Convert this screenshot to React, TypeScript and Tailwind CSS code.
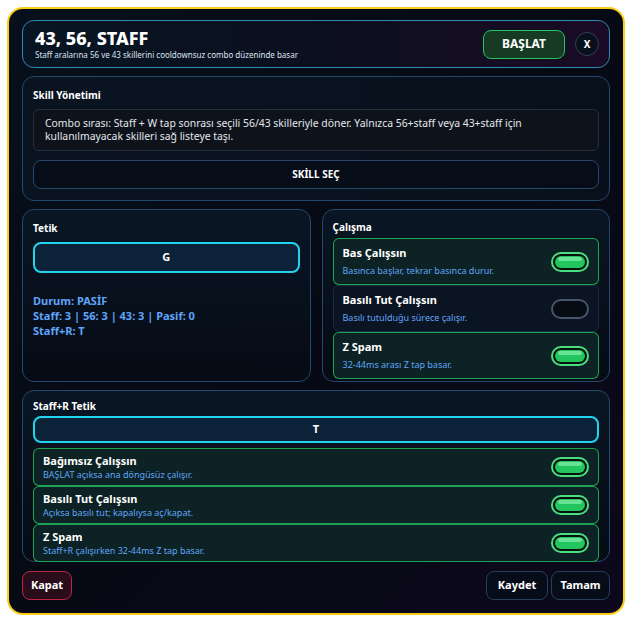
import React from 'react'

const font = { fontFamily: '"Noto Sans", "Open Sans", sans-serif' }

function Toggle({ on }: { on: boolean }) {
  if (on) {
    return (
      <div className="w-[38px] h-[20px] rounded-full border-2 border-[#4ade80] bg-[#06110c] p-[2px] shrink-0">
        <div className="h-full w-full rounded-full bg-[#22c55e] relative overflow-hidden">
          <div className="absolute left-[3px] right-[3px] top-[1px] h-[4px] rounded-full bg-[#86efac]/70" />
        </div>
      </div>
    )
  }
  return <div className="w-[38px] h-[20px] rounded-full border-2 border-[#475569] bg-[#070b12] shrink-0" />
}

function OptionRow({
  title,
  desc,
  on,
  tall,
}: {
  title: string
  desc: string
  on: boolean
  tall?: boolean
}) {
  return (
    <div
      className={
        'flex items-center justify-between rounded-md border px-[9px] ' +
        (tall ? 'h-[47px] ' : 'h-[38px] ') +
        (on ? 'border-[#22c55e]/80 bg-[#0c2224]' : 'border-[#1e2b3d] bg-[#0a1422]')
      }
    >
      <div className={'flex flex-col ' + (tall ? 'gap-[5px]' : 'gap-[1px]')}>
        <span className="text-[11px] font-bold text-white leading-[14px]">{title}</span>
        <span className="text-[9px] text-[#60a5fa] leading-[12px]">{desc}</span>
      </div>
      <Toggle on={on} />
    </div>
  )
}

function KeyBox({ k, h }: { k: string; h: string }) {
  return (
    <div
      className={
        'flex items-center justify-center rounded-lg border-2 border-[#22d3ee] bg-[#0b2238] text-[11px] font-bold text-white ' +
        h
      }
    >
      {k}
    </div>
  )
}

export default function App() {
  return (
    <div className="w-[632px] h-[622px] bg-white p-[7px]" style={font}>
      <div className="h-[608px] w-[618px] rounded-[16px] border-2 border-[#facc15] bg-gradient-to-br from-[#07101b] via-[#060a14] to-[#0d081c] px-[13px] pt-[11px] flex flex-col">
        {/* header */}
        <div className="h-[48px] rounded-xl border border-[#2f8bb0] bg-gradient-to-r from-[#081522] via-[#0b0f1f] to-[#1a0b26] flex items-center justify-between pl-[12px] pr-[10px]">
          <div className="flex flex-col">
            <span className="text-[18px] font-extrabold text-white leading-[20px]">43, 56, STAFF</span>
            <span className="text-[8px] text-[#dbe4f0] leading-[10px] mt-[2px]">
              Staff aralarına 56 ve 43 skillerini cooldownsuz combo düzeninde basar
            </span>
          </div>
          <div className="flex items-center gap-[10px]">
            <button className="w-[82px] h-[29px] rounded-lg border border-[#22c55e] bg-[#173a25] text-[12px] font-bold text-white">
              BAŞLAT
            </button>
            <button className="w-[24px] h-[24px] rounded-full border border-[#334155] bg-[#0a0f1c] text-[10px] font-bold text-white flex items-center justify-center">
              X
            </button>
          </div>
        </div>

        {/* skill management */}
        <div className="mt-[8px] rounded-xl border border-[#24486a] bg-gradient-to-r from-[#0a1420] to-[#08101c] px-[10px] pt-[11px] pb-[11px]">
          <div className="text-[10px] font-bold text-white leading-[14px]">Skill Yönetimi</div>
          <div className="mt-[7px] h-[42px] rounded-md border border-[#262f3c] bg-[#0e131b] px-[11px] pt-[7px] text-[10.4px] text-[#e5e7eb] leading-[13px]">
            Combo sırası: Staff + W tap sonrası seçili 56/43 skilleriyle döner. Yalnızca 56+staff veya 43+staff için
            kullanılmayacak skilleri sağ listeye taşı.
          </div>
          <button className="mt-[9px] w-full h-[29px] rounded-lg border border-[#28466a] bg-[#070d18] text-[10px] font-bold text-white">
            SKİLL SEÇ
          </button>
        </div>

        {/* trigger + mode */}
        <div className="mt-[8px] grid grid-cols-2 gap-[11px] h-[173px]">
          <div className="rounded-xl border border-[#24486a] bg-gradient-to-b from-[#0a1624] to-[#060b15] px-[10px] pt-[11px]">
            <div className="text-[10px] font-bold text-white leading-[14px]">Tetik</div>
            <div className="mt-[7px]">
              <KeyBox k="G" h="h-[31px]" />
            </div>
            <div className="mt-[20px] text-[11px] font-bold text-[#60a5fa] leading-[15px]">
              <div>Durum: PASİF</div>
              <div>Staff: 3 | 56: 3 | 43: 3 | Pasif: 0</div>
              <div>Staff+R: T</div>
            </div>
          </div>
          <div className="rounded-xl border border-[#24486a] bg-gradient-to-b from-[#0a1624] to-[#060b15] px-[10px] pt-[10px] flex flex-col">
            <div className="text-[10px] font-bold text-white leading-[14px]">Çalışma</div>
            <div className="mt-[4px] flex flex-col">
              <OptionRow tall on title="Bas Çalışsın" desc="Basınca başlar, tekrar basınca durur." />
              <OptionRow tall on={false} title="Basılı Tut Çalışsın" desc="Basılı tutulduğu sürece çalışır." />
              <OptionRow tall on title="Z Spam" desc="32-44ms arası Z tap basar." />
            </div>
          </div>
        </div>

        {/* staff+r trigger */}
        <div className="mt-[8px] h-[172px] rounded-xl border border-[#24486a] bg-gradient-to-b from-[#0a1624] to-[#060b15] px-[10px] pt-[8px]">
          <div className="text-[10px] font-bold text-white leading-[14px]">Staff+R Tetik</div>
          <div className="mt-[3px]">
            <KeyBox k="T" h="h-[27px]" />
          </div>
          <div className="mt-[5px] flex flex-col">
            <OptionRow on title="Bağımsız Çalışsın" desc="BAŞLAT açıksa ana döngüsüz çalışır." />
            <OptionRow on title="Basılı Tut Çalışsın" desc="Açıksa basılı tut; kapalıysa aç/kapat." />
            <OptionRow on title="Z Spam" desc="Staff+R çalışırken 32-44ms Z tap basar." />
          </div>
        </div>

        {/* footer */}
        <div className="mt-[9px] flex items-center justify-between">
          <button className="w-[50px] h-[29px] rounded-lg border border-[#be2448] bg-[#2a0d1a] text-[11px] font-bold text-white">
            Kapat
          </button>
          <div className="flex gap-[3px]">
            <button className="w-[62px] h-[29px] rounded-lg border border-[#26405e] bg-[#070d18] text-[11px] font-bold text-white">
              Kaydet
            </button>
            <button className="w-[59px] h-[29px] rounded-lg border border-[#26405e] bg-[#070d18] text-[11px] font-bold text-white">
              Tamam
            </button>
          </div>
        </div>
      </div>
    </div>
  )
}
